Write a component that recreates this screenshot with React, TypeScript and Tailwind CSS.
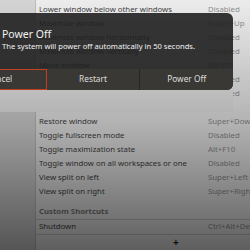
import React from "react";

const rows: [string, string][] = [
  ["Lower window below other windows", "Disabled"],
  ["Maximize window", "Super+Up"],
  ["Maximize window horizontally", "Disabled"],
  ["Maximize window vertically", "Disabled"],
  ["Move window", "Alt+F7"],
  ["Raise window above other windows", "Disabled"],
  ["Raise window if covered, otherwise lower it", "Disabled"],
  ["Resize window", "Alt+F8"],
  ["Restore window", "Super+Down"],
  ["Toggle fullscreen mode", "Disabled"],
  ["Toggle maximization state", "Alt+F10"],
  ["Toggle window on all workspaces or one", "Disabled"],
  ["View split on left", "Super+Left"],
  ["View split on right", "Super+Right"],
];

function App() {
  return (
    <div
      className="relative w-[250px] h-[250px] overflow-hidden flex"
      style={{ fontFamily: '"Noto Sans", "Open Sans", sans-serif' }}
    >
      <div className="w-[35px] shrink-0 bg-[#d4d4d4]" />
      <div className="flex-1 min-w-0 bg-[#ececec] border-l border-[#bdbdbd] pt-[3px] text-[7.8px]">
        {rows.map(([name, key]) => (
          <div key={name} className="flex h-[14px] items-center pl-[3px]">
            <span className="w-[169px] shrink-0 text-[#424242] whitespace-nowrap overflow-hidden">{name}</span>
            <span className="text-[#8e8e8e] whitespace-nowrap">{key}</span>
          </div>
        ))}
        <div className="h-[20px] flex items-end pb-[1px] pl-[3px] font-bold text-[#7a7a7a]">
          Custom Shortcuts
        </div>
        <div className="h-[16px] border-t border-b border-[#c8c8c8] flex items-center pl-[3px]">
          <span className="w-[169px] shrink-0 text-[#424242]">Shutdown</span>
          <span className="text-[#8e8e8e] whitespace-nowrap">Ctrl+Alt+Del</span>
        </div>
        <div className="h-[15px] flex items-center pl-[137px] text-[10px] font-bold text-[#222]">
          +
        </div>
      </div>

      <div className="absolute left-[-48px] top-[90px] w-[281px] h-[22px] bg-[#e8e8e8]" />

      <div className="absolute inset-0 bg-linear-to-b from-black/0 via-black/25 to-black/60" />

      <div className="absolute left-[-48px] top-[13px] w-[281px] rounded-r-[6px] overflow-hidden bg-[#202020]/90">
        <div className="h-[56px] pl-[50px] pt-[14px] text-[#f2f2f2]">
          <div className="text-[10.5px] leading-[14px]">Power Off</div>
          <div className="text-[7.6px] leading-[11px] whitespace-nowrap">
            The system will power off automatically in 50 seconds.
          </div>
        </div>
        <div className="flex h-[21px] bg-[#3a3834] text-[8.3px] text-[#dedede]">
          <div className="flex-1 flex items-center justify-center border border-[#c2401e]">Cancel</div>
          <div className="flex-1 flex items-center justify-center border-r border-[#26251f]">Restart</div>
          <div className="flex-1 flex items-center justify-center">Power Off</div>
        </div>
      </div>
    </div>
  );
}

export default App;
